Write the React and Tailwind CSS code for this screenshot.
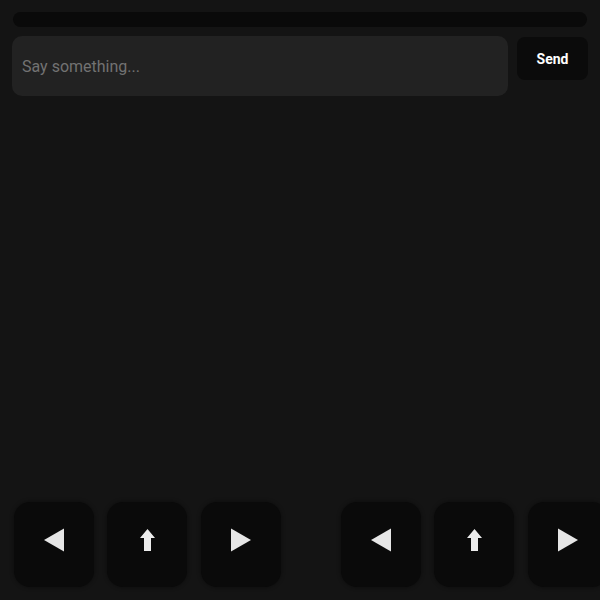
import React from "react";

function LeftIcon() {
  return (
    <svg width="20" height="24" viewBox="0 0 20 24">
      <polygon points="0,12 20,0.5 20,23.5" fill="#e6e6e6" />
    </svg>
  );
}

function RightIcon() {
  return (
    <svg width="20" height="24" viewBox="0 0 20 24">
      <polygon points="20,12 0,0.5 0,23.5" fill="#e6e6e6" />
    </svg>
  );
}

function UpIcon() {
  return (
    <svg width="15" height="22" viewBox="0 0 15 22">
      <path d="M7.5 0 L15 9 L11 9 L11 22 L4 22 L4 9 L0 9 Z" fill="#ececec" />
    </svg>
  );
}

function PadButton({ children }) {
  return (
    <button className="w-20 h-[85px] shrink-0 rounded-2xl bg-[#0a0a0a] shadow-[0_0_4px_rgba(0,0,0,0.45)] flex items-center justify-center pb-[9px]">
      {children}
    </button>
  );
}

function Pad() {
  return (
    <div className="flex gap-[13.5px] shrink-0">
      <PadButton>
        <LeftIcon />
      </PadButton>
      <PadButton>
        <UpIcon />
      </PadButton>
      <PadButton>
        <RightIcon />
      </PadButton>
    </div>
  );
}

export default function App() {
  return (
    <div className="h-screen w-full overflow-hidden bg-[#141414] flex flex-col font-['Roboto',sans-serif]">
      <div className="px-3 pt-3">
        {/* status bar */}
        <div className="mx-px h-[15px] rounded-full bg-[#0a0a0a]" />

        {/* chat input */}
        <div className="mt-[9px] flex items-start gap-[9px]">
          <input
            type="text"
            placeholder="Say something..."
            className="flex-1 min-w-0 h-[60px] rounded-[10px] bg-[#222222] px-[10px] text-base text-white placeholder:text-[#727272] outline-none"
          />
          <button className="mt-[1px] w-[71px] h-[43px] rounded-lg bg-[#0b0b0b] text-sm font-bold text-white">
            Send
          </button>
        </div>
      </div>

      <div className="flex-1" />

      {/* controls */}
      <div className="flex gap-[60px] pl-[13.5px] pb-[13px]">
        <Pad />
        <Pad />
      </div>
    </div>
  );
}
